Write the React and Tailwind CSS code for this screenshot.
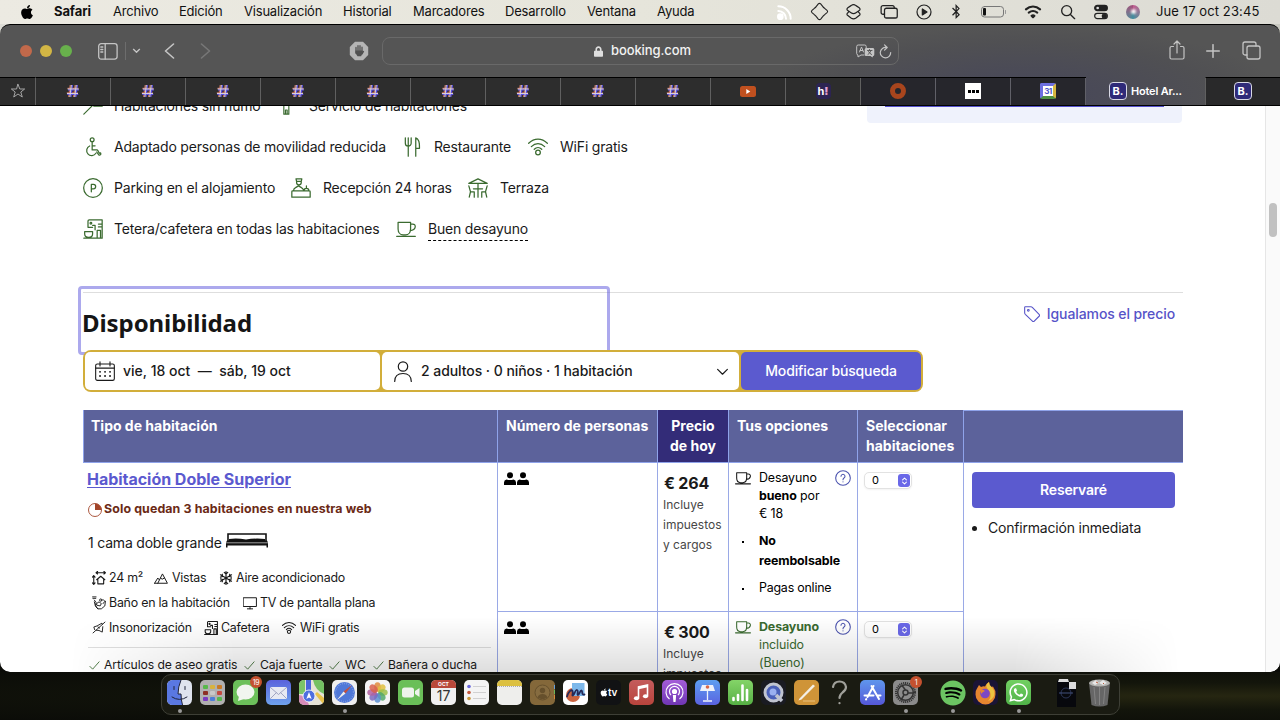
import React from "react";
import { FaApple, FaSpotify, FaWhatsapp, FaFirefoxBrowser, FaBluetoothB, FaLock } from "react-icons/fa";

function Svg({ children, className = "", box = "0 0 24 24", sw = 1.4 }) {
  return (
    <svg viewBox={box} className={"shrink-0 " + className} fill="none" stroke="currentColor" strokeWidth={sw} strokeLinecap="round" strokeLinejoin="round">
      {children}
    </svg>
  );
}

/* ---------- amenity drawings ---------- */
const Wheelchair = (p) => (
  <Svg {...p}><circle cx="11" cy="3.200" r="2.300" /><path d="M11 6v9.500h5.500q1 0 1.500 1l1.500 3 1.500-.5q1 2-.5 2.500t-2-.5L16.500 18M11 10.500h3.500M8 10.800A6 6 0 1 0 15.500 19.500" /></Svg>
);
const Cutlery = (p) => (
  <Svg {...p}><path d="M4 1v6.500a3.500 3.500 0 0 0 7 0V1M7.500 1v22M16.500 23V1c3 1 4.800 6 4.500 12.500h-4.500" /></Svg>
);
const Wifi = (p) => (
  <Svg {...p}><circle cx="12" cy="18.500" r="2.800" /><path d="M.8 7.500C7.500 1 16.500 1 23.200 7.500M4 11.500c4.800-4.600 11.200-4.600 16 0M7.500 14.700c2.600-2.500 6.400-2.500 9 0" /></Svg>
);
const Parking = (p) => (
  <Svg {...p}><circle cx="12" cy="12" r="11.200" /><path d="M10 16.500V7.500h2.500a2.700 2.700 0 0 1 0 5.400H10" /></Svg>
);
const Reception = (p) => (
  <Svg {...p}><path d="M1 23V16.500q0-1 1-1h20q1 0 1 1V23zM3 15.500q0-3 2.500-4L9 9.500l3.500 2q2 1 3 4M6 1h7l-.7 3H6.700zM6.700 4v1.500a2.800 2.800 0 0 0 5.600 0V4M15.500 15.500a3 3 0 0 1 6 0M18.500 12V9.500" /></Svg>
);
const Terrace = (p) => (
  <Svg {...p}><path d="M1 6.500L12 1l11 5.500zM12 6.500V23M6.500 13h11M1 9.500l2 7h4.500M3 16.500L1.500 23M7.500 16.500V23M23 9.500l-2 7h-4.500M21 16.500l1.500 6.500M16.500 16.500V23" /></Svg>
);
const Coffee = (p) => (
  <Svg {...p}><path d="M6 10V2.500Q6 1 7.500 1H23v22H1M6 10h5.500M11.500 7.500h3v5.500M17 23V13.500h4V23M18.500 6H23M18.500 9.500H23M2 15h9.500v3q0 4-4.700 4T2 18z" /><circle cx="9.500" cy="5" r="1" /></Svg>
);
const Cup = (p) => (
  <Svg {...p}><path d="M2.500 4h15v8c0 4-2.500 7-6 7h-3c-3.500 0-6-3-6-7zM17.500 6h2.500c4.500 0 4.500 7.500-3 8M.8 20.800h22.400" /></Svg>
);
const Check = (p) => <Svg {...p}><path d="M2 14l6 6L22 4" /></Svg>;

/* ---------- macOS menu bar ---------- */
function MenuBar() {
  return (
    <div className="flex h-6 shrink-0 items-center bg-linear-to-r from-[#eceae2] via-[#e6e5db] to-[#dcdbd4] pb-px text-[13px] leading-[23px] text-[#111]">
      <FaApple className="ml-5 h-[16px] w-[14px] text-black" />
      <span className="ml-5 w-[59px] font-bold tracking-[-0.1px]">Safari</span>
      <span className="w-[66px] tracking-[-0.2px]">Archivo</span>
      <span className="w-[65px] tracking-[-0.2px]">Edición</span>
      <span className="w-[99px] tracking-[-0.2px]">Visualización</span>
      <span className="w-[70px] tracking-[-0.2px]">Historial</span>
      <span className="w-[92px] tracking-[-0.2px]">Marcadores</span>
      <span className="w-[82px] tracking-[-0.2px]">Desarrollo</span>
      <span className="w-[70px] tracking-[-0.2px]">Ventana</span>
      <span className="w-[120px] tracking-[-0.2px]">Ayuda</span>
      <div className="flex items-center text-[#222]">
        <Svg className="h-4 w-4 text-white" sw={3}><circle cx="5" cy="19" r="3.500" fill="currentColor" /><path d="M2 10.500A11.500 11.500 0 0 1 13.500 22M2 3.500A18.500 18.500 0 0 1 20.500 22" /></Svg>
        <Svg className="ml-[17px] h-[19px] w-[19px]" sw={1.400}><path d="M10.500 2.500q1.500-1.500 3 0l2.500 3q1 1.500 2.500 2.500l3 2.500q1.500 1.500 0 3l-3 2.500q-1.500 1-2.500 2.500l-2.500 3q-1.500 1.500-3 0L8 18.500Q7 17 5.500 16l-3-2.500q-1.500-1.500 0-3l3-2.500Q7 7 8 5.500z" /></Svg>
        <Svg className="ml-[16px] h-[18px] w-[17px]" sw={1.700}><path d="M8.500 3q3.500-2.500 7 0l4.500 3q2.500 2 0 4l-4.500 3q-3.500 2.500-7 0L4 10Q1.500 8 4 6zM5.500 11.500L4 13q-2.500 2 0 4l4.500 3.500q3.500 2.500 7 0L20 17q2.500-2 0-4l-1.500-1.500" /></Svg>
        <Svg className="ml-[18px] h-[18px] w-[18px]" sw={1.700}><path d="M6 15H4a2.500 2.500 0 0 1-2.500-2.500V6A2.500 2.500 0 0 1 4 3.500h12.500A2.500 2.500 0 0 1 19 6v1" /><rect x="6" y="7" width="17" height="13" rx="2.500" /></Svg>
        <Svg className="ml-[18px] h-4 w-4" sw={1.800}><circle cx="12" cy="12" r="10.500" /><path d="M9.500 7.500v9l7-4.500z" fill="currentColor" /></Svg>
        <FaBluetoothB className="ml-[17px] h-[15px] w-[14px]" />
        <Svg className="ml-[18px] h-[12px] w-[26px]" box="0 0 26 12" sw={1}><rect x=".5" y=".5" width="22" height="10.500" rx="3" stroke="#777" /><rect x="2" y="2" width="3" height="7.500" rx="1" fill="#111" stroke="none" /><path d="M24.500 4.500v3" stroke="#999" /></Svg>
        <Svg className="ml-[17px] h-[17px] w-[18px]" sw={3}><path d="M2 9c6-5.500 14-5.500 20 0M6 13.500c4-3 8-3 12 0" /><path d="M10 18q2-1.500 4 0l-2 2z" fill="currentColor" /></Svg>
        <Svg className="ml-[18px] h-[16px] w-[16px]" sw={2}><circle cx="10" cy="10" r="7.500" /><path d="M16 16l6 6" /></Svg>
        <Svg className="ml-[17px] h-[16px] w-[16px]" sw={1.800}><rect x="2.500" y="2" width="19" height="8" rx="4" fill="currentColor" /><circle cx="7" cy="6" r="2" fill="#ddd" stroke="none" /><rect x="2.500" y="14" width="19" height="8" rx="4" /><circle cx="17" cy="18" r="3" fill="currentColor" /></Svg>
        <span className="ml-[17px] flex h-[14px] w-[14px] items-center justify-center rounded-full bg-conic from-[#c15a8f] via-[#3f8d9e] to-[#a34d79]"><i className="h-[5px] w-[5px] rounded-full bg-white/90 blur-[1px]" /></span>
      </div>
      <span className="ml-4 whitespace-nowrap tracking-[0.1px]">Jue 17 oct 23:45</span>
    </div>
  );
}

/* ---------- Safari toolbar ---------- */
function Toolbar() {
  return (
    <div className="flex h-[52px] shrink-0 items-center text-[#c4c4c4]">
      <i className="ml-5 h-3 w-3 rounded-full bg-[#c1694b]" />
      <i className="ml-2 h-3 w-3 rounded-full bg-[#d2b645]" />
      <i className="ml-2 h-3 w-3 rounded-full bg-[#68b04c]" />
      <Svg className="ml-[26px] h-[17px] w-5" box="0 0 20 17" sw={1.300}><rect x=".7" y=".7" width="18.400" height="15.400" rx="2.500" /><path d="M7.200.7v15.400M2.800 4h2M2.800 6.500h2M2.800 9h2" /></Svg>
      <i className="ml-[7px] h-[18px] w-px bg-[#6d6d6d]" />
      <Svg className="ml-[6px] h-2 w-[9px]" sw={4}><path d="M3 7l9 9 9-9" /></Svg>
      <Svg className="ml-[23px] h-4 w-[11px]" box="0 0 11 16" sw={1.600}><path d="M9.500 1L1.500 8l8 7" /></Svg>
      <Svg className="ml-[25px] h-4 w-[11px] text-[#777]" box="0 0 11 16" sw={1.600}><path d="M1.500 1l8 7-8 7" /></Svg>
      <Svg className="ml-[138px] h-5 w-5" box="0 0 20 20" sw={1.300}><path d="M6 .8h8L19.200 6v8L14 19.200H6L.8 14V6z" fill="#b5b5b5" stroke="none" /><path d="M7 12V6.500M9 10V4.700M11 10V4.700M13 11V6.200M14.500 10.500L13 13" stroke="#505050" /><path d="M6.400 9.500h7.200v2.500l-1.500 3.200H8.500L6.400 12z" fill="#505050" stroke="none" /></Svg>
      <div className="ml-[13px] flex h-7 w-[517px] items-center rounded-lg border border-[#696969] text-[13px]">
        <FaLock className="ml-[211px] h-[13px] w-[9px] text-[#dedede]" />
        <span className="ml-2 w-[245px] font-medium tracking-[-0.1px] text-[#f2f2f2]">booking.com</span>
        <Svg className="h-[14px] w-[19px]" box="0 0 19 14" sw={1}><path d="M8 11H5l-3 2v-2H2a1.500 1.500 0 0 1-1.300-1.500v-7A1.500 1.500 0 0 1 2.200 1h6.500a1.500 1.500 0 0 1 1.500 1.500V4M3.500 8l2-5 2 5M4.200 6.500h2.500" /><path d="M10 4h7q1.300 0 1.300 1.500v5q0 1.500-1.300 1.500l-.5 1.500-2-1.500H10q-1.300 0-1.300-1.500v-5Q8.700 4 10 4z" fill="#c4c4c4" stroke="none" /><path d="M11.500 6.500h4.500M13.500 5.500v1M15 6.500q-1 3-3 4M12.500 7.500q1 2 3 3" stroke="#505050" strokeWidth=".9" /></Svg>
        <Svg className="ml-[4px] h-[15px] w-[13px]" box="0 0 13 15" sw={1.200}><path d="M7.500 3.500a5.200 5.200 0 1 0 4.200 5M5.500.8l2.700 2.700-2.700 2.700" /></Svg>
      </div>
      <Svg className="-mt-[2px] ml-[270px] h-5 w-4" box="0 0 16 20" sw={1.200}><path d="M4.500 6.500H2.500A1.500 1.500 0 0 0 1 8v9.500A1.500 1.500 0 0 0 2.500 19h11a1.500 1.500 0 0 0 1.500-1.500V8a1.500 1.500 0 0 0-1.500-1.500h-2M8 13V1M5 4l3-3 3 3" /></Svg>
      <Svg className="ml-[21px] h-[14px] w-[14px]" box="0 0 14 14" sw={1.500}><path d="M7 .7v12.600M.7 7h12.600" /></Svg>
      <Svg className="-mt-px ml-[22px] h-[19px] w-[19px]" box="0 0 19 19" sw={1.300}><path d="M5 14H3a2 2 0 0 1-2-2V3a2 2 0 0 1 2-2h9a2 2 0 0 1 2 2v2" /><rect x="5" y="5" width="13" height="13" rx="2" /></Svg>
    </div>
  );
}

function BookingMark() {
  return <span className="flex h-[18px] w-[18px] items-center justify-center rounded-[4px] border border-[#d8d8e4] bg-[#2f2a79] text-[11px] font-bold text-white">B.</span>;
}
function Hash() {
  return (
    <svg viewBox="0 0 14 14" className="h-[14px] w-[14px]" fill="none" strokeWidth="1.300">
      <path d="M4.300 1L2.700 13M9.200 1L7.600 13M1.500 4.300h11M.8 8.800h11" stroke="#c4705c" />
      <path d="M6.500 1L4.900 13M11.400 1L9.800 13M2 5.800h11M1.300 10.300h11" stroke="#5c4ee0" />
      <path d="M5.400 1L3.800 13M10.300 1L8.700 13M1.700 5h11M1 9.500h11" stroke="#d6cede" strokeWidth="1" />
    </svg>
  );
}
function TabBar() {
  const cell = "flex w-[75px] items-center justify-center border-r border-[#606060] bg-[#2d2d2d]";
  const dark = "flex w-[75px] items-center justify-center border-r border-[#606068] bg-[#26262c]";
  return (
    <div className="flex h-[29px] shrink-0 border-b border-black">
      <div className="flex w-9 items-center justify-center border-t border-r border-t-black border-r-[#606060] bg-[#2d2d2d] pb-px text-[#a5a5a5]"><Svg className="h-4 w-4" sw={1.500}><path d="M12 2l2.700 7h7.300l-5.800 4.500 2.200 7.500L12 16.500 5.600 21l2.200-7.500L2 9h7.300z" /></Svg></div>
      <div className="flex border-t border-black">
        {Array.from({ length: 9 }, (_, i) => <div key={i} className={cell + " pb-px"}><Hash /></div>)}
        <div className={cell}><svg viewBox="0 0 16 11" className="-mt-px h-[11px] w-4"><rect width="16" height="11" rx="2.500" fill="#c0501f" /><path d="M6.300 3v5l4-2.500z" fill="#fff" /></svg></div>
        <div className={cell}><span className="-mt-px flex h-4 w-[15px] items-center justify-center rounded bg-[#2c2452] text-[11px] leading-none font-bold text-white">h<b className="text-[#e0a0d0]">!</b></span></div>
        <div className={dark}><i className="-mt-px h-4 w-4 rounded-full border-[5px] border-[#a8451d]" /></div>
        <div className={dark}><span className="-mt-px flex h-4 w-4 items-center justify-center gap-px bg-white"><i className="h-[3px] w-[3px] bg-black" /><i className="h-[3px] w-[3px] bg-black" /><i className="h-[3px] w-[3px] bg-black" /></span></div>
        <div className={dark}><span className="-mt-px flex h-4 w-4 items-center justify-center rounded-[2px] border-3 border-t-[#6d6fe0] border-r-[#d6b640] border-b-[#4f9142] border-l-[#6d6fe0] bg-white text-[8px] leading-none font-bold tracking-[-0.5px] text-[#4d55c8]">31</span></div>
      </div>
      <div className="flex w-[119px] items-center pl-[23px]"><BookingMark /><span className="ml-[4px] text-[11px] font-semibold tracking-[-0.2px] text-white">Hotel Ar...</span></div>
      <div className="flex flex-1 items-center justify-center border-t border-l border-t-black border-l-[#606060] bg-[#29292a] pb-px"><BookingMark /></div>
    </div>
  );
}

/* ---------- page ---------- */
function Amenity({ icon: Icon, w, gap = "ml-[11px]", children }) {
  return (
    <div className={"flex items-center " + w}>
      <Icon className="h-5 w-5 text-[#3b6b30]" sw={1.500} />
      <span className={"whitespace-nowrap " + gap}>{children}</span>
    </div>
  );
}

function Amenities() {
  return (
    <div className="w-[867px] pl-[83px] text-[14px] leading-[41px] tracking-[-0.19px] text-[#1a1a1a]">
      <div className="-mt-[22px] flex h-[42px]">
        <div className="flex w-[195px] items-center"><Svg className="h-5 w-5 text-[#3b6b30]"><path d="M1 23L23 1M13 13.500h10v-3H16" /></Svg><span className="ml-[11px]">Habitaciones sin humo</span></div>
        <div className="flex items-center"><Svg className="h-5 w-5 text-[#3b6b30]"><path d="M7 23V3h6v20zM9 23v-5h2v5" /></Svg><span className="ml-[11px]">Servicio de habitaciones</span></div>
      </div>
      <div className="flex h-[41px]">
        <Amenity icon={Wheelchair} w="w-[319px]">Adaptado personas de movilidad reducida</Amenity>
        <Amenity icon={Cutlery} w="w-[126px]" gap="ml-3">Restaurante</Amenity>
        <Amenity icon={Wifi} w="w-[120px]" gap="ml-3">WiFi gratis</Amenity>
      </div>
      <div className="flex h-[41px]">
        <Amenity icon={Parking} w="w-[208px]">Parking en el alojamiento</Amenity>
        <Amenity icon={Reception} w="w-[177px]" gap="ml-3">Recepción 24 horas</Amenity>
        <Amenity icon={Terrace} w="w-[120px]" gap="ml-3">Terraza</Amenity>
      </div>
      <div className="flex h-[41px]">
        <Amenity icon={Coffee} w="w-[313px]">Tetera/cafetera en todas las habitaciones</Amenity>
        <Amenity icon={Cup} w="w-[140px]" gap="ml-3"><span className="inline-block h-[24px] border-b border-dashed border-black leading-[23px]">Buen desayuno</span></Amenity>
      </div>
    </div>
  );
}

function SearchBar() {
  return (
    <div className="relative flex h-[42px] w-[840px] gap-[2px] rounded-[8px] bg-[#d2ae3a] p-[2px] text-[14px] text-[#1a1a1a]">
      <div className="flex w-[295px] items-center rounded-[5px] bg-white pl-[10px] font-medium">
        <Svg className="h-5 w-5" sw={1.300}><rect x=".8" y="3.500" width="22.400" height="19.700" rx="2" /><path d="M.8 8.500h22.400M6 1v5M18 1v5" /><path d="M6 13h.1M12 13h.1M18 13h.1M6 18h.1M12 18h.1M18 18h.1" strokeWidth="2.200" /></Svg>
        <span className="ml-[8px] pb-px whitespace-pre tracking-[0px]">vie, 18 oct  —  sáb, 19 oct</span>
      </div>
      <div className="flex w-[357px] items-center rounded-[5px] bg-white pl-[12px] font-medium">
        <Svg className="h-[21px] w-[18px]" box="0 0 18 21" sw={1.200}><circle cx="9" cy="5.500" r="4.700" /><path d="M.7 20.500c0-5 3-8 8.300-8s8.300 3 8.300 8" /></Svg>
        <span className="ml-[9px] pb-px tracking-[-0.06px]">2 adultos · 0 niños · 1 habitación</span>
        <Svg className="mr-[10px] ml-auto h-[13px] w-[13px]" sw={2.200}><path d="M3 8l9 9 9-9" /></Svg>
      </div>
      <div className="flex w-[180px] items-center justify-center rounded-[5px] bg-[#5b5acf] pb-px font-medium tracking-[-0.14px] text-white">Modificar búsqueda</div>
    </div>
  );
}

function Fact({ icon, w, text = "ml-[3px]", children }) {
  return <div className={"flex items-center " + w}>{icon}<span className={"whitespace-nowrap " + text}>{children}</span></div>;
}

function RoomInfo() {
  const ic = "h-[14px] w-[14px]";
  return (
    <div className="w-[414px] pl-[5px] text-[#1a1a1a]">
      <div className="mt-[5px] -ml-px text-[16px] leading-[22px] font-bold tracking-[-0.03px] text-[#5b59cf] underline decoration-1 underline-offset-2">Habitación Doble Superior</div>
      <div className="mt-[8px] flex h-[22px] items-center text-[12.400px] font-bold tracking-[0.11px] text-[#6b2a16]">
        <svg viewBox="0 0 14 14" className="mt-[2px] h-[14px] w-[14px]"><circle cx="7" cy="7" r="6.500" fill="none" stroke="#a3452a" strokeWidth=".9" /><path d="M7 7V.5A6.500 6.500 0 0 1 13.500 7z" fill="#a3452a" /></svg>
        <span className="ml-[2px]">Solo quedan 3 habitaciones en nuestra web</span>
      </div>
      <div className="mt-[11px] flex h-[22px] items-center text-[14px] tracking-[-0.2px]">
        <span>1 cama doble grande</span>
        <svg viewBox="0 0 42 15" className="-mt-[3px] ml-[4px] h-[15px] w-[42px]"><path d="M2 8V1h38v7" fill="none" stroke="#111" strokeWidth="1.600" /><path d="M3 6Q11 5 20 6.500q9-1.500 19-.5V8H3z" fill="#111" /><path d="M1 7.500h40l1 2v5h-1.500V12.500h-39v2H0v-5z" fill="#111" /><path d="M0 9.800h42" stroke="#fff" strokeWidth=".6" /></svg>
      </div>
      <div className="mt-[12px] pl-1 text-[12.400px] leading-[25px] tracking-[-0.22px]">
        <div className="flex h-[25px]">
          <Fact w="w-[62px]" icon={<Svg className={ic} sw={1.900}><path d="M7 3h16M9.500 .8L7 3l2.500 2.200M20.500 .8L23 3l-2.500 2.200M3 8v15M.8 10.500L3 8l2.200 2.500M.8 20.500L3 23l2.200-2.500M8 15l7-6 7 6M10 14v8h10v-8" /></Svg>}>24 m²</Fact>
          <Fact w="w-[65px]" text="ml-1" icon={<Svg className={ic} sw={1.700}><path d="M1 21h22L14.500 5 6.500 21M1 21l5.500-9 2.500 3M11 12l3 2 4-2" /></Svg>}>Vistas</Fact>
          <Fact w="w-[140px]" icon={<Svg className={ic} sw={2}><path d="M12 1v22M2.500 6.500l19 11M21.500 6.500l-19 11M9 2.500l3 3 3-3M9 21.500l3-3 3 3M2.500 10.500l4-1-1-4M21.500 13.500l-4 1 1 4M21.500 10.500l-4-1 1-4M2.500 13.500l4 1-1 4" /></Svg>}>Aire acondicionado</Fact>
        </div>
        <div className="flex h-[25px]">
          <Fact w="w-[151px]" icon={<Svg className={ic} sw={1.600}><path d="M1 1.500h6M1.500 4h5M4 7l3 4-1 5 4 6h6l6-5 1-8M8 13l4-3 4 3-2 4-5-1zM4 10l2 8 4 4M19 6l3 3-3 4" /><circle cx="15" cy="7" r="2" /></Svg>}>Baño en la habitación</Fact>
          <Fact w="w-[150px]" icon={<Svg className={ic} sw={1.700}><path d="M1 3h22v15H1zM12 18v4M7.500 22h9" /></Svg>}>TV de pantalla plana</Fact>
        </div>
        <div className="flex h-[25px]">
          <Fact w="w-[112px]" icon={<Svg className="h-[13px] w-[14px]" sw={1.700}><path d="M1 22L23 2M4 16l-1.500-5 6-2 9-5 .5 2M7 17l5 .5 6 3 1-10M13 13l-3-2" /></Svg>}>Insonorización</Fact>
          <Fact w="w-[78px]" icon={<Coffee className={ic} sw={1.800} />}>Cafetera</Fact>
          <Fact w="w-[90px]" text="ml-1" icon={<Wifi className={ic} sw={1.800} />}>WiFi gratis</Fact>
        </div>
      </div>
      <div className="mt-[7px] w-[403px] border-t border-[#dedede]" />
      <div className="mt-[8px] flex h-[18px] items-center text-[12.200px] tracking-[-0.1px]">
        <Fact w="w-[156px]" text="ml-[4px]" icon={<Check className="ml-px h-[11px] w-[11px] text-[#3b6b30]" sw={1.900} />}>Artículos de aseo gratis</Fact>
        <Fact w="w-[85px]" text="ml-[5px]" icon={<Check className="h-[11px] w-[11px] text-[#3b6b30]" sw={1.900} />}>Caja fuerte</Fact>
        <Fact w="w-[44px]" text="ml-[5px]" icon={<Check className="h-[11px] w-[11px] text-[#3b6b30]" sw={1.900} />}>WC</Fact>
        <Fact w="w-[110px]" text="ml-[4px]" icon={<Check className="h-[11px] w-[11px] text-[#3b6b30]" sw={1.900} />}>Bañera o ducha</Fact>
      </div>
    </div>
  );
}

function People() {
  return (
    <svg viewBox="0 0 26 14" className="h-[14px] w-[26px]" fill="#000"><circle cx="6" cy="3.300" r="3" /><path d="M0 13V10.500Q0 8 2.500 7.500q3.500 1.200 7 0 2.500.5 2.500 3V13z" /><circle cx="19" cy="3.300" r="3" /><path d="M13 13V10.500q0-2.500 2.500-3 3.500 1.200 7 0 2.500.5 2.500 3V13z" /></svg>
  );
}

function Help() {
  return <Svg className="mt-px h-4 w-4 text-[#4a52ae]" sw={1.600}><circle cx="12" cy="12" r="11" /><path d="M9 9.500a3 3 0 1 1 4.500 2.600Q12 13 12 14.500M12 17.700v.1" /></Svg>;
}

function Offer({ price, children, cup }) {
  return (
    <div className="flex h-[149px] border-b border-[#9aa9e6]">
      <div className="w-[160px] border-l border-[#9aa9e6] pt-[9px] pl-[6px]"><People /></div>
      <div className="w-[71px] border-l border-[#9aa9e6] pt-[9px] pl-[5px] text-[12px] leading-5 text-[#474747]">
        <div className="mb-px pl-px text-[16px] leading-[22px] font-bold tracking-[-0.2px] text-[#1a1a1a]">€ {price}</div>
        Incluye<br />impuestos<br />y cargos
      </div>
      <div className="flex w-[129px] border-l border-[#9aa9e6] pt-[6px] pl-[6px] text-[12.400px] tracking-[-0.1px]">
        <Cup className={"mt-px h-4 w-4 " + cup} sw={1.600} />
        <div className="ml-2 w-[76px] leading-[18px] whitespace-nowrap">{children}</div>
        <Help />
      </div>
      <div className="w-[107px] border-x border-[#9aa9e6] pt-[9px] pl-[6px]">
        <div className="flex h-[17px] w-12 items-center rounded-[5px] border border-[#e2e2e2] bg-white pl-[7px] text-[11px] text-black shadow-xs">
          0
          <span className="mr-px ml-auto flex h-[13px] w-[12px] items-center justify-center rounded-[3px] bg-[#6a68e8] text-white"><Svg className="h-[10px] w-[9px]" sw={2.800}><path d="M7 9l5-5 5 5M7 15l5 5 5-5" /></Svg></span>
        </div>
      </div>
    </div>
  );
}

function RoomTable() {
  const th = "border-l border-[#8fa3ea] pl-[8px] pt-[6px]";
  return (
    <div className="w-[1100px]">
      <div className="flex h-[53px] border-b border-[#8fa3ea] bg-[#5c629b] text-[14px] leading-5 font-bold tracking-[0px] text-white">
        <div className="w-[414px] border-l border-[#8fa3ea] pt-[6px] pl-[7px]">Tipo de habitación</div>
        <div className={"w-[160px] whitespace-nowrap " + th}>Número de personas</div>
        <div className="w-[71px] border-l border-[#8fa3ea] bg-[#332c78] pt-[6px] text-center">Precio<br />de hoy</div>
        <div className={"w-[129px] " + th}>Tus opciones</div>
        <div className={"w-[106px] " + th}>Seleccionar<br />habitaciones</div>
        <div className="w-[220px] border-t border-l border-[#8fa3ea]" />
      </div>
      <div className="flex">
        <RoomInfo />
        <div className="w-[467px]">
          <Offer price="264" cup="text-[#1a1a1a]">
            Desayuno<br /><b>bueno</b> por<br />€ 18
            <div className="relative mt-[8px] leading-5 font-bold"><i className="absolute top-[10px] -left-[17px] h-[2px] w-[2px] bg-black" />No<br />reembolsable</div>
            <div className="relative mt-[7px] leading-5 tracking-[-0.2px]"><i className="absolute top-[10px] -left-[17px] h-[2px] w-[2px] bg-black" />Pagas online</div>
          </Offer>
          <Offer price="300" cup="text-[#3b6b30]">
            <div className="text-[#3b6b30]"><b>Desayuno</b><br />incluido<br />(Bueno)</div>
          </Offer>
        </div>
        <div className="w-[219px] pt-[9px] pl-2">
          <div className="flex h-9 w-[203px] items-center justify-center rounded bg-[#5b5acf] pb-px text-[14px] font-semibold tracking-[-0.2px] text-white">Reservaré</div>
          <div className="mt-[10px] flex items-center text-[14px] leading-5 tracking-[-0.2px] text-[#1a1a1a]"><i className="h-[5px] w-[5px] rounded-full bg-[#1a1a1a]" /><span className="ml-[11px]">Confirmación inmediata</span></div>
        </div>
      </div>
    </div>
  );
}

function Page() {
  return (
    <div className="relative flex h-[566px] overflow-hidden rounded-b-[10px] bg-white">
      <div className="w-[1265px]">
        <div className="flex h-[144px]">
          <Amenities />
          <div className="h-[17px] w-[315px] rounded-b bg-[#eff2fc] px-[18px]"><div className="h-px bg-[#5350cc]" /></div>
        </div>
        <div className="relative mt-[42px] ml-[83px] flex h-[58px] w-[1100px] justify-between border-t border-[#dedede]">
          <div className="absolute -top-[7px] -left-[5px] h-[69px] w-[532px] rounded-[4px] border-3 border-[#5a54dc]/50" />
          <h2 className="mt-[14px] -ml-px font-['Noto_Sans'] text-[24px] leading-[32px] font-bold tracking-[-0.08px] text-[#151515]">Disponibilidad</h2>
          <div className="mt-[11px] mr-[8px] flex h-5 items-center text-[14px] font-medium tracking-[-0.1px] text-[#5653c8]">
            <Svg className="h-4 w-4" sw={1.600}><path d="M2 1h8.500q1 0 2 1L23 13q1 1 0 2l-8 8q-1 1-2 0L2 12.500q-1-1-1-2V2q0-1 1-1z" /><circle cx="6.500" cy="6.500" r="1.300" /></Svg>
            <span className="ml-[7px] pb-[2px]">Igualamos el precio</span>
          </div>
        </div>
        <div className="ml-[83px]"><SearchBar /></div>
        <div className="mt-[18px] ml-[83px]"><RoomTable /></div>
      </div>
      <div className="w-[15px] border-l border-[#e6e6e6] bg-[#fafafa] pt-[97px] pl-[3px]"><div className="h-[34px] w-2 rounded-full bg-[#c1c1c1]" /></div>
      <div className="pointer-events-none absolute bottom-0 left-[70px] h-[55px] w-[1110px] bg-linear-to-b from-transparent to-black/13 mask-x-from-85% mask-x-to-100%" />
    </div>
  );
}

/* ---------- dock ---------- */
function App25({ bg = "", dot, badge, children }) {
  return (
    <div className={"relative mr-2 flex h-[25px] w-[25px] shrink-0 items-center justify-center rounded-[5px] " + bg}>
      {children}
      {badge && <span className="absolute -top-[4px] -right-[4px] flex h-[12px] w-[12px] items-center justify-center rounded-full bg-[#c4512f] text-[7px] leading-none tracking-[-0.3px] text-white">{badge}</span>}
      {dot && <i className="absolute top-[29px] left-[11px] h-[4px] w-[4px] rounded-full bg-[#999]" />}
    </div>
  );
}
const full = "h-[25px] w-[25px]";

function Dock() {
  const pad = ["#58b84c", "#d8b33e", "#c87a26", "#8d2f25", "#c9c9c9", "#c54a40", "#7b3ac0", "#4e7fd8", "#58b84c"];
  const petals = ["#e08a3c", "#e0c040", "#9cc04a", "#52a86a", "#5a8fd0", "#7c68c0", "#b060a0", "#d8604c"];
  return (
    <div className="flex h-[41px] w-[959px] rounded-[10px] border border-[#3e3f36] bg-[#1a1b12] pt-[5px] pl-[5px]">
      <App25 dot><svg viewBox="0 0 25 25" className={full}><rect width="25" height="25" rx="5.500" fill="#dfe3ee" /><path d="M5.500 0H14Q11 7 11 14h3q0 6 1.500 11h-10A5.500 5.500 0 0 1 0 19.500v-14A5.500 5.500 0 0 1 5.500 0z" fill="#5a78e2" /><path d="M14 0q-3 7-3 14h3q0 6 1.500 11M7 6.500v3M18 6.500v3M5 17q7.500 5 15 0" stroke="#20243a" fill="none" strokeLinecap="round" /></svg></App25>
      <App25 bg="bg-[#b1b0b0]"><div className="grid grid-cols-3 gap-[2px]">{pad.map((c, i) => <i key={i} className="h-1 w-[5px] rounded-[1px]" style={{ background: c }} />)}</div></App25>
      <App25 bg="bg-[#6cc05a]" badge="19"><svg viewBox="0 0 25 25" className={full}><ellipse cx="12.500" cy="12" rx="9" ry="7.500" fill="#f1f5ef" /><path d="M6 16l-1 5 6-2z" fill="#f1f5ef" /></svg></App25>
      <App25 bg="bg-linear-to-b from-[#5a62dc] to-[#6fa2ec]"><svg viewBox="0 0 25 25" className={full}><rect x="4" y="7" width="17" height="12" rx="1.500" fill="#e8eaf2" /><path d="M4.500 7.500l8 7 8-7M4.500 18.500l6-6M20.500 18.500l-6-6" fill="none" stroke="#8e93b5" strokeWidth=".8" /></svg></App25>
      <App25 bg="overflow-hidden bg-[#e6e3d6]"><svg viewBox="0 0 25 25" className={full}><path d="M0 0h6v14H0z" fill="#7cc468" /><path d="M14 0h11v14q-9-4-11-14z" fill="#74c062" /><path d="M0 15q7 0 10 10H0z" fill="#d58bb8" /><path d="M16 14l9 11v-7L18 12z" fill="#e8c24a" /><path d="M7 0h5v14H7z" fill="#4b66dc" /><circle cx="10" cy="16" r="6" fill="#4e6fe0" stroke="#fff" strokeWidth=".8" /><path d="M10 12l2.700 7-2.700-1.500L7.300 19z" fill="#fff" /></svg></App25>
      <App25 dot bg="bg-[#efefef]"><svg viewBox="0 0 25 25" className={full}><circle cx="12.500" cy="12.500" r="10.500" fill="#4f78d8" /><circle cx="12.500" cy="12.500" r="9" fill="none" stroke="#8fa9e8" strokeDasharray=".6 1.500" strokeWidth="1.300" /><path d="M20 5l-6.500 8.500-2-2z" fill="#c4503c" /><path d="M5 20l6.500-8.500 2 2z" fill="#eee" /></svg></App25>
      <App25 bg="bg-[#f4f4f4]"><svg viewBox="0 0 25 25" className={full}>{petals.map((c, i) => <ellipse key={i} cx="12.500" cy="7" rx="3.300" ry="4.700" fill={c} opacity=".85" transform={"rotate(" + i * 45 + " 12.5 12.5)"} />)}</svg></App25>
      <App25 bg="bg-[#6abf58]"><svg viewBox="0 0 25 25" className={full}><rect x="4" y="7.500" width="12" height="10" rx="2.500" fill="#eef3ec" /><path d="M17 11l4.500-3v9L17 14z" fill="#eef3ec" /></svg></App25>
      <App25 bg="overflow-hidden bg-[#f0f0f0]"><div className="flex h-full w-full flex-col items-center"><span className="h-2 w-full bg-[#b9493a] text-center text-[5px] leading-[8px] font-bold text-white">OCT</span><span className="text-[14px] leading-[16px] text-[#333]">17</span></div></App25>
      <App25 bg="bg-[#f4f4f4]"><svg viewBox="0 0 25 25" className={full}><circle cx="5" cy="6.500" r="1.800" fill="#6868dc" /><circle cx="5" cy="12.500" r="1.800" fill="#c4583c" /><circle cx="5" cy="18.500" r="1.800" fill="#c89838" /><path d="M9 6.500h13M9 12.500h13M9 18.500h13" stroke="#c8c8c8" strokeWidth=".8" /></svg></App25>
      <App25 bg="overflow-hidden bg-[#eeeeec]"><div className="h-full w-full border-t-[6px] border-[#dcc040]"><div className="border-t border-dotted border-[#aaa]" /></div></App25>
      <App25 bg="bg-[#84683a]"><svg viewBox="0 0 25 25" className={full}><circle cx="12.500" cy="12.500" r="7.500" fill="#866c40" stroke="#66502c" /><circle cx="12.500" cy="10.500" r="2.700" fill="#66502c" /><path d="M7.500 17.500q1-3.500 5-3.500t5 3.500q-5 3.500-10 0z" fill="#66502c" /><path d="M24.500 5v4" stroke="#6aa0d8" /><path d="M24.500 10v4" stroke="#6cb858" /><path d="M24.500 15v4" stroke="#d88a3c" /></svg></App25>
      <App25 bg="overflow-hidden bg-white"><svg viewBox="0 0 25 25" className={full}><circle cx="10" cy="15" r="7" fill="#cc6440" /><rect x="9" y="3" width="12.500" height="13" fill="#7db8ea" /><path d="M4 16.500C6 11 8.500 9 9.500 11S8.500 16 10 15.500s2-6 4-5.500-.5 5 1 5 2-5 3.500-4.500-.5 4.500 3 4" fill="none" stroke="#262a58" strokeWidth="1.800" strokeLinecap="round" /></svg></App25>
      <App25 bg="bg-[#111214]"><span className="flex items-center text-[10px] font-semibold tracking-[-0.4px] text-white"><FaApple className="h-[9px] w-[8px]" />tv</span></App25>
      <App25 bg="bg-linear-to-b from-[#c45c5c] to-[#b8443c]"><svg viewBox="0 0 25 25" className={full}><path d="M9.500 18V7l9-2v11" fill="none" stroke="#fff" strokeWidth="1.600" /><path d="M9.500 8l9-2" stroke="#fff" strokeWidth="2.500" /><ellipse cx="7.500" cy="18.300" rx="2.600" ry="2" fill="#fff" /><ellipse cx="16.500" cy="16.300" rx="2.600" ry="2" fill="#fff" /></svg></App25>
      <App25 bg="bg-linear-to-b from-[#a45cd8] to-[#7036b4]"><svg viewBox="0 0 25 25" className={full} fill="none" stroke="#fff" strokeWidth="1.200"><path d="M7.500 19a8.500 8.500 0 1 1 10 0M9 15a5 5 0 1 1 7 0" /><circle cx="12.500" cy="11.500" r="2" fill="#fff" /><path d="M11.500 15.500h2l-.5 6h-1z" fill="#fff" /></svg></App25>
      <App25 bg="bg-linear-to-b from-[#5c9ef0] to-[#5a62e0]"><svg viewBox="0 0 25 25" className={full}><path d="M5 11l2-6h11l2 6z" fill="#eef2fa" /><path d="M12.500 11v9M8 21h9" stroke="#eef2fa" strokeWidth="1.300" /><circle cx="12.500" cy="7" r="1.800" fill="#d86848" /></svg></App25>
      <App25 bg="bg-linear-to-b from-[#84d468] to-[#56b044]"><svg viewBox="0 0 25 25" className={full} stroke="#fff" strokeWidth="2.600" strokeLinecap="round"><path d="M5.500 20v-2M10 20v-5M14.500 20V5.500M19 20V10" /></svg></App25>
      <App25 bg="bg-[#1a1b22]"><svg viewBox="0 0 25 25" className={full}><circle cx="12.500" cy="12.500" r="8.500" fill="#4a60b8" stroke="#c0c4d0" strokeWidth="3" /><circle cx="12" cy="12" r="3.500" fill="#9ab0f0" /><path d="M15 15l6 6" stroke="#c0c4d0" strokeWidth="3.500" /></svg></App25>
      <App25 bg="bg-[#cf9438]"><svg viewBox="0 0 25 25" className={full}><path d="M5.500 18.500L19 4.500l2 1.500L7.500 19.500l-3 1z" fill="#f4efe6" /><path d="M9 21h12" stroke="#e9c07c" /></svg></App25>
      <App25><svg viewBox="0 0 25 25" className={full} fill="none" stroke="#a0a09a" strokeWidth="2.200" strokeLinecap="round"><path d="M6 7q1-5.500 6.500-5.500T19 7q0 3-3.500 5.500Q12.500 15 12.500 18M12.500 23v.2" /></svg></App25>
      <App25 bg="bg-linear-to-b from-[#5f96ec] to-[#5557d8]"><svg viewBox="0 0 25 25" className={full} stroke="#fff" strokeWidth="2" strokeLinecap="round"><path d="M13.500 6L7.500 17M11.500 6l7.500 13M4.500 15.500h9M17 15.500h3.500M6 19.500l.3-.5" /></svg></App25>
      <App25 dot badge="1" bg="bg-[#8b8b8b]"><svg viewBox="0 0 25 25" className={full} fill="none" stroke="#333"><circle cx="12.500" cy="12.500" r="9.500" strokeWidth="2" strokeDasharray="1.200 .8" /><circle cx="12.500" cy="12.500" r="7.800" strokeWidth="1.500" /><circle cx="12.500" cy="12.500" r="2.500" strokeWidth="1.500" /><path d="M12.500 10L9 5.500M15 13h5.500M11 15l-3 5" strokeWidth="1.500" /></svg></App25>
      <i className="mt-[-1px] mr-[10px] ml-1 h-[30px] w-px bg-[#44453c]" />
      <App25 dot><span className="h-[22px] w-[22px] shrink-0 rounded-full bg-black" /><FaSpotify className="absolute h-[26px] w-[26px] text-[#6cc462]" /></App25>
      <App25 bg="bg-[#1a1436]"><svg viewBox="0 0 25 25" className={full}><path d="M4 8.500L6 5l2 2q2-1 4-.5 1-3 4-4.500 0 3 2.500 5l1.500-.500q3 4 2.500 8a10 10 0 0 1-20 0q-.5-3.500 1.500-6z" fill="#e6862f" /><path d="M16 2q0 3 2.500 5 4 3.500 2.500 9-2 4-6 5 4-4 2-9-2-2-3-4-2-3 2-6z" fill="#ecc340" /><circle cx="12" cy="13.500" r="4.800" fill="#7d48c4" /><path d="M7 10q3-1 5 1-3 1-3.500 3z" fill="#e6862f" /></svg></App25>
      <App25 dot bg="bg-linear-to-b from-[#72d062] to-[#50b248]"><FaWhatsapp className="h-[21px] w-[21px] text-white" /></App25>
      <i className="mt-[-1px] mr-[12px] ml-[3px] h-[30px] w-px bg-[#44453c]" />
      <App25><svg viewBox="0 0 25 28" className="h-7 w-[25px] shrink-0"><path d="M4 0h10l2 3h6v25H3V3z" fill="#07080d" /><path d="M5 0h9l1 3H4zM15 3h7v7h-7z" fill="#dcdcdc" /><circle cx="12" cy="14" r="5" fill="none" stroke="#2c3656" /><path d="M5 14h14" stroke="#42507c" /></svg></App25>
      <App25><svg viewBox="0 0 25 28" className="h-7 w-[25px] shrink-0"><path d="M2 4h21l-2.500 22q-8 3-16 0z" fill="#666" /><path d="M7 8l1.500 17M12.500 8v18M18 8l-1.500 17" stroke="#838383" /><ellipse cx="12.500" cy="4" rx="10.500" ry="3.500" fill="#b5b5b2" /><path d="M5 4l4-3 3 3 4-3 4 3-4 2-4-2-4 2z" fill="#e8e8e8" /><path d="M9 3l2 1M16 4l1 1" stroke="#b65a3a" /></svg></App25>
    </div>
  );
}

export default function App() {
  return (
    <div className="flex h-[720px] w-[1280px] flex-col overflow-hidden bg-[#0a0b07] font-['Inter','Liberation_Sans',sans-serif]">
      <MenuBar />
      <div className="h-[648px] w-full shrink-0 bg-linear-to-r from-[#dddcd6] to-[#c8c8c0] [background-size:100%_20px] bg-no-repeat">
        <div className="h-full overflow-hidden rounded-[10px] border-t border-black bg-[radial-gradient(ellipse_260px_70px_at_1020px_70px,#46465a_0%,#505053_75%,#555555_100%)]">
          <Toolbar />
          <TabBar />
          <Page />
        </div>
      </div>
      <div className="flex flex-1 bg-[radial-gradient(ellipse_at_95%_50%,#262611_0%,#13150b_40%,#0b0c08_100%)] pt-[2px] pl-[161px]">
        <Dock />
      </div>
    </div>
  );
}
